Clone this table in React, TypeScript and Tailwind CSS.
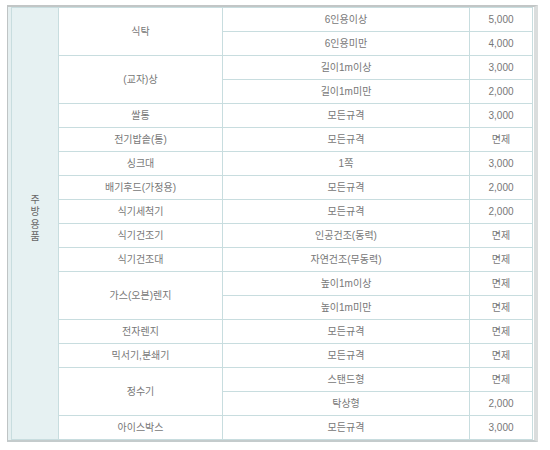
const groups: { name: string; rows: [string, string][] }[] = [
  { name: "식탁", rows: [["6인용이상", "5,000"], ["6인용미만", "4,000"]] },
  { name: "(교자)상", rows: [["길이1m이상", "3,000"], ["길이1m미만", "2,000"]] },
  { name: "쌀통", rows: [["모든규격", "3,000"]] },
  { name: "전기밥솥(통)", rows: [["모든규격", "면제"]] },
  { name: "싱크대", rows: [["1쪽", "3,000"]] },
  { name: "배기후드(가정용)", rows: [["모든규격", "2,000"]] },
  { name: "식기세척기", rows: [["모든규격", "2,000"]] },
  { name: "식기건조기", rows: [["인공건조(동력)", "면제"]] },
  { name: "식기건조대", rows: [["자연건조(무동력)", "면제"]] },
  { name: "가스(오븐)렌지", rows: [["높이1m이상", "면제"], ["높이1m미만", "면제"]] },
  { name: "전자렌지", rows: [["모든규격", "면제"]] },
  { name: "믹서기,분쇄기", rows: [["모든규격", "면제"]] },
  { name: "정수기", rows: [["스탠드형", "면제"], ["탁상형", "2,000"]] },
  { name: "아이스박스", rows: [["모든규격", "3,000"]] },
];

const total = groups.reduce((n, g) => n + g.rows.length, 0);

const cell = "border border-[#c8dddf] text-center align-middle p-0";

export default function App() {
  return (
    <div
      className="w-[550px] h-[450px] bg-white pt-[5px] pl-[7px] text-[10px] text-[#777777]"
      style={{ fontFamily: '"Liberation Sans", "Noto Sans CJK KR", sans-serif' }}
    >
      <div className="flex w-[531px] border-l border-t-2 border-b-2 border-r-[4px] border-l-[#bfc4c5] border-t-[#c2c6c6] border-b-[#c4cbcc] border-r-[#dadddd]">
        <div className="w-[3px] bg-[#e5eff0]" />
        <table className="table-fixed border-collapse w-[522px]">
          <colgroup>
            <col className="w-[47px]" />
            <col className="w-[164px]" />
            <col className="w-[247px]" />
            <col className="w-[63px]" />
          </colgroup>
          <tbody>
            {groups.map((g, gi) =>
              g.rows.map(([spec, fee], ri) => (
                <tr key={`${gi}-${ri}`} className="h-[24px]">
                  {gi === 0 && ri === 0 && (
                    <td
                      rowSpan={total}
                      className={`${cell} bg-[#e6f1f2] text-[#666666] leading-[12.5px] pb-[10px]`}
                    >
                      주<br />방<br />용<br />품
                    </td>
                  )}
                  {ri === 0 && (
                    <td rowSpan={g.rows.length} className={cell}>
                      {g.name}
                    </td>
                  )}
                  <td className={cell}>{spec}</td>
                  <td className={cell}>{fee}</td>
                </tr>
              ))
            )}
          </tbody>
        </table>
      </div>
    </div>
  );
}
